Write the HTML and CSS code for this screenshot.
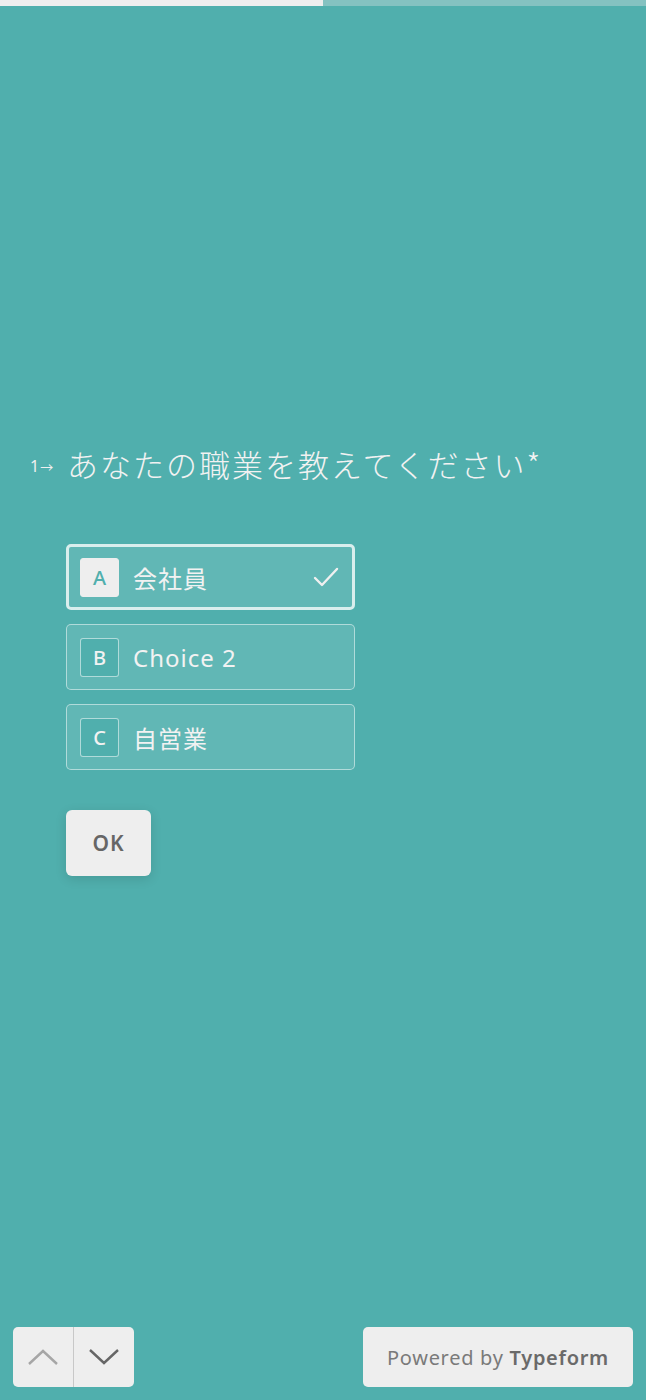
FILE: index.html
```html
<!DOCTYPE html>
<html lang="ja">
<head>
    <meta charset="UTF-8">
    <meta name="viewport" content="width=device-width, initial-scale=1.0">
    <title>Typeform</title>
    <link rel="stylesheet" href="styles.css">
</head>
<body>
    <div class="progress"><div class="progress-fill"></div></div>
    <main class="form">
        <div class="question">
            <span class="q-num">1<span class="q-arrow">&rarr;</span></span>
            <h1 class="q-text">あなたの職業を教えてください*</h1>
        </div>
        <div class="choices">
            <div class="choice selected">
                <span class="key">A</span>
                <span class="label">会社員</span>
                <svg class="check" width="26" height="22" viewBox="0 0 26 22"><path d="M2 12 L9 19 L24 3" fill="none" stroke="#f0f0f0" stroke-width="2.4" stroke-linecap="round" stroke-linejoin="round"/></svg>
            </div>
            <div class="choice">
                <span class="key">B</span>
                <span class="label">Choice 2</span>
            </div>
            <div class="choice">
                <span class="key">C</span>
                <span class="label">自営業</span>
            </div>
        </div>
        <button class="ok">OK</button>
    </main>
    <footer class="footer">
        <div class="nav">
            <button class="nav-btn up"><svg width="32" height="18" viewBox="0 0 32 18"><path d="M2 16 L16 3 L30 16" fill="none" stroke="#a6a6a6" stroke-width="2.4"/></svg></button>
            <button class="nav-btn down"><svg width="32" height="18" viewBox="0 0 32 18"><path d="M2 2 L16 15 L30 2" fill="none" stroke="#666" stroke-width="2.4"/></svg></button>
        </div>
        <div class="powered">Powered by <b>Typeform</b></div>
    </footer>
</body>
</html>
```

FILE: styles.css
```css
body {
    margin: 0;
    height: 1400px;
    background: #50afad;
    font-family: "Noto Sans", "Noto Sans CJK JP", sans-serif;
    display: flex;
    flex-direction: column;
    overflow: hidden;
}
.progress {
    height: 6px;
    background: #84c2c1;
}
.progress-fill {
    width: 323px;
    height: 100%;
    background: #eeeeee;
}
.form {
    flex: 1;
    padding-top: 430px;
}
.question {
    display: flex;
    align-items: center;
    padding-left: 30px;
}
.q-num {
    width: 37px;
    font-size: 16px;
    color: #f0f0f0;
    padding-top: 4px;
}
.q-arrow {
    font-size: 13px;
    margin-left: 1px;
}
.q-text {
    margin: 0;
    font-family: "Noto Sans CJK JP", sans-serif;
    font-weight: 300;
    font-size: 31px;
    line-height: 56px;
    color: #f2f2f2;
    letter-spacing: 2px;
}
.choices {
    margin: 52px 0 0 66px;
    display: flex;
    flex-direction: column;
    gap: 14px;
}
.choice {
    box-sizing: border-box;
    width: 289px;
    height: 66px;
    display: flex;
    align-items: center;
    padding: 0 13px;
    border: 1.5px solid rgba(255, 255, 255, 0.5);
    border-radius: 5px;
    background: rgba(255, 255, 255, 0.1);
    color: #f2f2f2;
}
.choice.selected {
    border: 3px solid #d9eeed;
    padding: 0 11px;
}
.key {
    box-sizing: border-box;
    width: 39px;
    height: 39px;
    display: flex;
    align-items: center;
    justify-content: center;
    border: 1.5px solid rgba(255, 255, 255, 0.55);
    border-radius: 3px;
    background: #50afad;
    font-size: 20px;
    font-weight: 500;
    color: #f2f2f2;
}
.selected .key {
    background: #eeeeee;
    border-color: #eeeeee;
    color: #50afad;
}
.label {
    margin-left: 14px;
    flex: 1;
    font-size: 24px;
    letter-spacing: 1px;
}
.check {
    margin-right: 2px;
}
.ok {
    margin: 40px 0 0 66px;
    width: 85px;
    height: 66px;
    border: none;
    border-radius: 6px;
    background: #eeeeee;
    color: #666666;
    font-family: "Noto Sans", sans-serif;
    font-size: 21px;
    font-weight: 600;
    letter-spacing: 1px;
    box-shadow: 0 3px 12px rgba(0, 0, 0, 0.12);
}
.footer {
    display: flex;
    justify-content: space-between;
    padding: 0 13px 13px 13px;
}
.nav {
    display: flex;
    border-radius: 5px;
    overflow: hidden;
}
.nav-btn {
    width: 60px;
    height: 60px;
    border: none;
    background: #eeeeee;
    display: flex;
    align-items: center;
    justify-content: center;
    padding: 0;
}
.nav-btn.up {
    border-right: 1px solid #c8c8c8;
    width: 61px;
}
.powered {
    width: 270px;
    height: 60px;
    box-sizing: border-box;
    border-radius: 5px;
    background: #eeeeee;
    display: flex;
    align-items: center;
    justify-content: center;
    font-size: 20px;
    color: #7a7a7a;
    letter-spacing: 0.7px;
}
.powered b {
    margin-left: 6px;
    font-weight: 600;
    color: #6a6a6a;
}
```
